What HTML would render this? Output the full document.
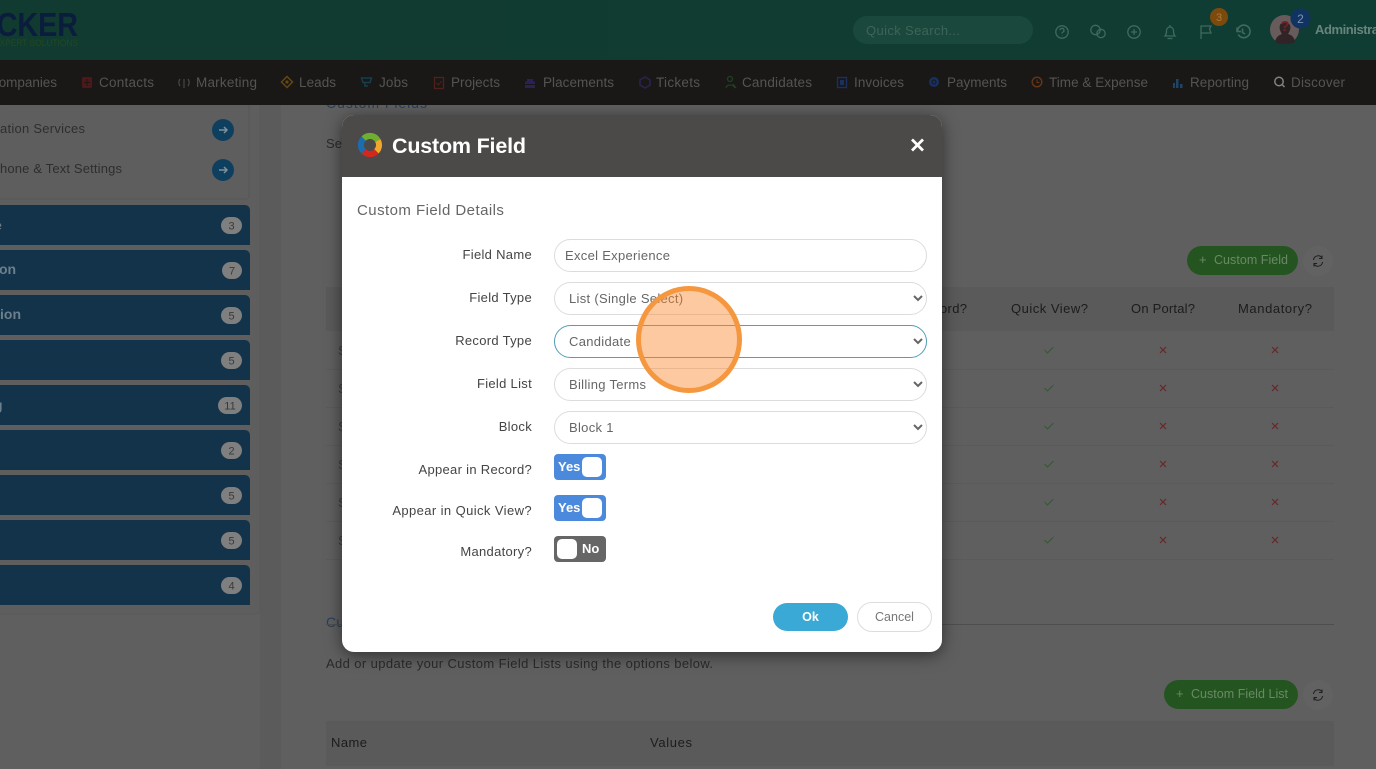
<!DOCTYPE html>
<html lang="en"><head><meta charset="utf-8"><title>Custom Field</title>
<style>
html,body{margin:0;padding:0;width:1376px;height:769px;overflow:hidden;background:#5f5f5f;font-family:"Liberation Sans",Arial,sans-serif}
svg text{font-family:"Liberation Sans",Arial,sans-serif}
#bg{position:absolute;left:0;top:0}
#modal{position:absolute;left:342px;top:115px;width:600px;height:537px;background:#fff;border-radius:12px;box-shadow:0 3px 16px rgba(0,0,0,.5);overflow:hidden}
#mh{height:62px;background:#4b4a48}
.c{position:absolute;left:212px;width:373px;height:33px;box-sizing:border-box;border:1px solid #dcdcdc;border-radius:17px;background:#fff;color:#666;font:13px "Liberation Sans",Arial,sans-serif;letter-spacing:.3px;padding:0 6px 0 10px;outline:0;margin:0}
input.c{padding-left:10px}
.l{position:absolute;right:410px;font-size:13px;letter-spacing:.3px;color:#444;white-space:nowrap;line-height:16px}
.t{position:absolute;left:212px;width:52px;height:26px;border-radius:4px;background:#4b89dc;color:#fff;font-size:13px;font-weight:bold}
.t i{position:absolute;top:3px;width:20px;height:20px;background:#fff;border-radius:5px}
.t span{position:absolute;top:5px;line-height:16px}
.off{background:#666}
.b{position:absolute;border-radius:16px;text-align:center;font-size:12.5px;box-sizing:border-box}
#dot{position:absolute;left:636px;top:286px;width:106px;height:107px;box-sizing:border-box;border:5px solid #f5973f;border-radius:50%;background:rgba(250,135,45,.45)}
</style></head><body>
<svg id="bg" width="1376" height="769" viewBox="0 0 1376 769" xmlns="http://www.w3.org/2000/svg">
<defs><linearGradient id="g" x1="0" x2="1" y1="0" y2="0"><stop offset="0" stop-color="#113a30"/><stop offset="1" stop-color="#103d33"/></linearGradient></defs>
<rect width="1376" height="769" fill="#5f5f5f"/>
<rect x="260" y="105" width="21" height="664" fill="#5b5b5b"/>
<rect x="0" y="105" width="260" height="509" rx="5" fill="#5e5e5e"/>
<path d="M0 199H246a3 3 0 0 0 3-3V105" fill="none" stroke="#575757"/>
<path d="M0 614H256a4 4 0 0 0 4-4V105" fill="none" stroke="#5a5a5a"/>

<text x="326" y="108" font-size="14" fill="#24405e" textLength="101">Custom Fields</text>

<!-- header -->
<rect width="1376" height="60" fill="url(#g)"/>
<text x="-24" y="36" font-size="33" font-weight="bold" fill="#0b1d3d" textLength="102" lengthAdjust="spacingAndGlyphs">ACKER</text>
<text x="-6" y="46" font-size="9.500" fill="#234a1c" textLength="84" lengthAdjust="spacingAndGlyphs">EXPERT SOLUTIONS</text>
<rect x="853" y="16" width="180" height="28" rx="14" fill="#1b483c"/>
<text x="866" y="35" font-size="13" fill="#3c6558" textLength="94">Quick Search...</text>
<g fill="none" stroke="#3f6a5d" stroke-width="1.300">
<circle cx="1062" cy="32" r="6.200"/><path d="M1060 30.300a2 2 0 1 1 2.900 1.800c-.7.4-.9.7-.9 1.400M1062 35.200v.4"/>
<circle cx="1095.500" cy="30" r="4.700"/><circle cx="1101" cy="33.500" r="4.200"/>
<circle cx="1134" cy="32" r="6.200"/><path d="M1134 29v6M1131 32h6"/>
<path d="M1165 36h10c-1.500-1.500-1.500-3-1.500-5.500a3.500 3.500 0 0 0-7 0c0 2.500 0 4-1.500 5.500zM1167.500 38.500h5M1170 25v2"/>
<path d="M1201 39V26h10l-1.500 3 1.500 4h-10"/>
<path d="M1237 27.500v4h4M1237.500 31a6.300 6.300 0 1 1 .8 3.500M1242.500 28.500v4l2.500 1.500" stroke-width="1.600"/>
</g>
<circle cx="1219" cy="17" r="9" fill="#7d4a0e"/><text x="1219" y="21" font-size="11" fill="#a87a3c" text-anchor="middle">3</text>
<circle cx="1284.500" cy="29.500" r="14.500" fill="#675b5c"/>
<path d="M1275 42c1-6 5-7 7-8-2-3-3-6-2-9 1-3 8-3 10 0 1 3 0 6-2 9 3 1 6 2 7 8-4 3-15 3-20 0z" fill="#302427"/>
<text x="1285" y="31" font-size="15" font-weight="bold" fill="#742024" text-anchor="middle">?</text>
<circle cx="1300.500" cy="18.500" r="10" fill="#103362"/><text x="1300.500" y="23" font-size="12" fill="#7c94b0" text-anchor="middle">2</text>
<text x="1315" y="34" font-size="13" font-weight="bold" fill="#68847b" textLength="64">Administra</text>

<!-- nav -->
<rect y="60" width="1376" height="45" fill="#1a1817"/>
<g font-size="13.500" fill="#545453">
<text x="-11" y="87" textLength="68">Companies</text>
<text x="99" y="87" textLength="55">Contacts</text>
<text x="196" y="87" textLength="61">Marketing</text>
<text x="299" y="87" textLength="37">Leads</text>
<text x="379" y="87" textLength="29">Jobs</text>
<text x="451" y="87" textLength="49">Projects</text>
<text x="543" y="87" textLength="71">Placements</text>
<text x="656" y="87" textLength="44">Tickets</text>
<text x="742" y="87" textLength="70">Candidates</text>
<text x="854" y="87" textLength="50">Invoices</text>
<text x="947" y="87" textLength="60">Payments</text>
<text x="1049" y="87" textLength="99">Time &amp; Expense</text>
<text x="1190" y="87" textLength="59">Reporting</text>
<text x="1291" y="87" textLength="54">Discover</text>
</g>
<rect x="82" y="77" width="10" height="11" rx="1.500" fill="#4e1818"/><path d="M84 82.500h6M87 79v7" stroke="#1a1817"/>
<g fill="none" stroke="#4c4c4a" stroke-width="1.100"><path d="M184 79v9M180 79c-1.500 2-1.500 5 0 7M188 79c1.500 2 1.500 5 0 7"/></g>
<g fill="none" stroke="#664810" stroke-width="1.400"><path d="M287 76.500l5.500 5.500-5.500 5.500-5.500-5.500z"/></g><circle cx="287" cy="82" r="1.600" fill="#664810"/>
<path d="M361.500 78h10l-1.500 4.500h-7zM365 83v3h3" fill="none" stroke="#153e4e" stroke-width="1.500"/>
<rect x="434.500" y="77.500" width="9" height="11" fill="none" stroke="#502118" stroke-width="1.300"/><path d="M436.500 83l2 2 3-4" fill="none" stroke="#502118"/>
<path d="M525 88v-6l2-1v-2h6v2l2 1v6z" fill="#2c2054"/><path d="M525 84.500h10" stroke="#1a1817"/>
<path d="M645 77l5 3v5l-5 3-5-3v-5z" fill="none" stroke="#2c224f" stroke-width="1.600"/>
<g fill="none" stroke="#1c421c" stroke-width="1.300"><circle cx="730" cy="79" r="2.500"/><path d="M726 88c1-4 7-4 9 0M733 84l3 4"/></g>
<rect x="837.500" y="77.500" width="9" height="10" fill="none" stroke="#1a305e" stroke-width="1.400"/><rect x="840" y="80" width="4" height="5" fill="#1a305e"/>
<circle cx="934" cy="82" r="5" fill="#183060"/><circle cx="934" cy="82" r="2" fill="none" stroke="#1a1817"/>
<circle cx="1037" cy="82" r="4.800" fill="none" stroke="#683514" stroke-width="1.400"/><path d="M1037 79.500V82.500h2.500" fill="none" stroke="#683514"/>
<path d="M1173 88v-5h2v5zM1176 88v-9h2.500v9zM1180 88v-4h2.500v4z" fill="#1c4568"/>
<circle cx="1279" cy="81.500" r="4.200" fill="none" stroke="#828282" stroke-width="1.500"/><path d="M1282 84.500l2.500 2.500" stroke="#828282" stroke-width="1.500"/>

<!-- sidebar -->
<g font-size="13" fill="#2e2e2e"><text x="0" y="133" textLength="85">ation Services</text><text x="0" y="173" textLength="122">hone &amp; Text Settings</text></g>
<g fill="#0f3f5e"><circle cx="223" cy="130" r="11"/><circle cx="223" cy="170" r="11"/></g>
<g fill="none" stroke="#7e909c" stroke-width="1.500"><path d="M219 130h7.500M224 127l3 3-3 3M219 170h7.500M224 167l3 3-3 3"/></g>
<g fill="#123349">
<path d="M0 205H245a5 5 0 0 1 5 5V245H0z"/>
<path d="M0 250H245a5 5 0 0 1 5 5V290H0z"/>
<path d="M0 295H245a5 5 0 0 1 5 5V335H0z"/>
<path d="M0 340H245a5 5 0 0 1 5 5V380H0z"/>
<path d="M0 385H245a5 5 0 0 1 5 5V425H0z"/>
<path d="M0 430H245a5 5 0 0 1 5 5V470H0z"/>
<path d="M0 475H245a5 5 0 0 1 5 5V515H0z"/>
<path d="M0 520H245a5 5 0 0 1 5 5V560H0z"/>
<path d="M0 565H245a5 5 0 0 1 5 5V605H0z"/>
</g>
<g font-size="14" font-weight="bold" fill="#6c7f8c"><text x="-6" y="230">e</text><text x="-1" y="274">on</text><text x="0" y="319">ion</text><text x="-6" y="410">g</text></g>
<g fill="#7f7f7f"><rect x="221" y="217" width="21" height="17" rx="8.500"/><rect x="222" y="262" width="20" height="17" rx="8.500"/><rect x="221" y="307" width="21" height="17" rx="8.500"/><rect x="221" y="352" width="21" height="17" rx="8.500"/><rect x="218" y="397" width="24" height="17" rx="8.500"/><rect x="221" y="442" width="21" height="17" rx="8.500"/><rect x="221" y="487" width="21" height="17" rx="8.500"/><rect x="221" y="532" width="21" height="17" rx="8.500"/><rect x="221" y="577" width="21" height="17" rx="8.500"/></g>
<g font-size="11" fill="#3a3a3a" text-anchor="middle"><text x="231.500" y="229.500">3</text><text x="232" y="274.500">7</text><text x="231.500" y="319.500">5</text><text x="231.500" y="364.500">5</text><text x="230" y="409.500">11</text><text x="231.500" y="454.500">2</text><text x="231.500" y="499.500">5</text><text x="231.500" y="544.500">5</text><text x="231.500" y="589.500">4</text></g>

<!-- main -->
<text x="326" y="148" font-size="13" fill="#2a2a2a" textLength="16">Se</text>
<rect x="1187" y="246" width="111" height="29" rx="14.500" fill="#245520"/>
<text x="1199" y="264" font-size="13" fill="#6a8866">+</text><text x="1214" y="264" font-size="12.500" fill="#6a8866" textLength="74">Custom Field</text>
<circle cx="1318" cy="261" r="15" fill="#626262"/>
<g fill="none" stroke="#1e1e1e" stroke-width="1"><path d="M1313.500 260a4.600 4.600 0 0 1 8.500-2M1322.500 262a4.600 4.600 0 0 1-8.500 2M1322 255.500v3h-3M1314 266.500v-3h3"/></g>
<rect x="326" y="287" width="1008" height="44" fill="#5a5a5a"/>
<g font-size="13" fill="#1c1c1c"><text x="940" y="313" textLength="27">ord?</text><text x="1011" y="313" textLength="77">Quick View?</text><text x="1131" y="313" textLength="64">On Portal?</text><text x="1238" y="313" textLength="74">Mandatory?</text></g>
<g stroke="#5a5a5a"><path d="M326 369.500H1334M326 407.500H1334M326 445.500H1334M326 483.500H1334M326 521.500H1334M326 559.500H1334"/></g>
<g font-size="13" fill="#3c3c3c"><text x="338" y="355">S</text><text x="338" y="393">S</text><text x="338" y="431">S</text><text x="338" y="469">S</text><text x="338" y="507">S</text><text x="338" y="545">S</text></g>
<g fill="none" stroke-width="1.100">
<path stroke="#345a32" d="M1044.500 350l3 3 6-6M1044.500 388l3 3 6-6M1044.500 426l3 3 6-6M1044.500 464l3 3 6-6M1044.500 502l3 3 6-6M1044.500 540l3 3 6-6"/>
<path stroke="#6a2626" stroke-width="1.200" d="M1160 347l6 6m0-6l-6 6M1272 347l6 6m0-6l-6 6M1160 385l6 6m0-6l-6 6M1272 385l6 6m0-6l-6 6M1160 423l6 6m0-6l-6 6M1272 423l6 6m0-6l-6 6M1160 461l6 6m0-6l-6 6M1272 461l6 6m0-6l-6 6M1160 499l6 6m0-6l-6 6M1272 499l6 6m0-6l-6 6M1160 537l6 6m0-6l-6 6M1272 537l6 6m0-6l-6 6"/>
</g>
<text x="326" y="627" font-size="14" fill="#24405e" textLength="18">Cu</text>
<path d="M326 624.500H1334" stroke="#4e4e4e"/>
<text x="326" y="668" font-size="13" fill="#2a2a2a" textLength="387">Add or update your Custom Field Lists using the options below.</text>
<rect x="1164" y="680" width="134" height="29" rx="14.500" fill="#245520"/>
<text x="1176" y="698" font-size="13" fill="#6a8866">+</text><text x="1191" y="698" font-size="12.500" fill="#6a8866" textLength="97">Custom Field List</text>
<circle cx="1318" cy="695" r="15" fill="#626262"/>
<g fill="none" stroke="#1e1e1e" stroke-width="1"><path d="M1313.500 694a4.600 4.600 0 0 1 8.500-2M1322.500 696a4.600 4.600 0 0 1-8.500 2M1322 689.500v3h-3M1314 700.500v-3h3"/></g>
<rect x="326" y="721" width="1008" height="45" fill="#5a5a5a"/>
<g font-size="13" fill="#1c1c1c"><text x="331" y="747" textLength="36">Name</text><text x="650" y="747" textLength="42">Values</text></g>
</svg>

<div id="modal">
<div id="mh">
<svg width="600" height="62" style="position:absolute;left:0;top:0">
<g fill="none" stroke-width="6">
<path d="M21.600 23.600A9 9 0 0 1 35.800 25.500" stroke="#6fae33"/>
<path d="M35.800 25.500A9 9 0 0 1 34.400 36.400" stroke="#f0a72c"/>
<path d="M34.400 36.400A9 9 0 0 1 21.600 36.400" stroke="#d4281f"/>
<path d="M21.600 36.400A9 9 0 0 1 21.600 23.600" stroke="#1c6cb0"/>
</g>
<text x="50" y="38" font-size="21.500" font-weight="bold" fill="#fff" textLength="134" style="font-family:'Liberation Sans',Arial,sans-serif">Custom Field</text>
<path d="M570 24.500l11 11m0-11l-11 11" stroke="#fff" stroke-width="2.800" fill="none"/>
</svg>
</div>
<div style="position:absolute;left:15px;top:87px;font-size:15px;letter-spacing:.45px;color:#666;line-height:18px;white-space:nowrap">Custom Field Details</div>

<div class="l" style="top:132px">Field Name</div>
<input class="c" style="top:124px" value="Excel Experience">
<div class="l" style="top:175px">Field Type</div>
<select class="c" style="top:167px"><option>List (Single Select)</option></select>
<div class="l" style="top:218px">Record Type</div>
<select class="c" style="top:210px;border-color:#4f9fb5"><option>Candidate</option></select>
<div class="l" style="top:261px">Field List</div>
<select class="c" style="top:253px"><option>Billing Terms</option></select>
<div class="l" style="top:304px">Block</div>
<select class="c" style="top:296px"><option>Block 1</option></select>

<div class="l" style="top:347px">Appear in Record?</div>
<div class="t" style="top:339px"><span style="left:4px">Yes</span><i style="left:28px"></i></div>
<div class="l" style="top:388px;letter-spacing:.4px">Appear in Quick View?</div>
<div class="t" style="top:380px"><span style="left:4px">Yes</span><i style="left:28px"></i></div>
<div class="l" style="top:429px">Mandatory?</div>
<div class="t off" style="top:421px"><i style="left:3px"></i><span style="left:28px">No</span></div>

<div class="b" style="left:431px;top:488px;width:75px;height:28px;line-height:28px;background:#3aa9d6;color:#fff;font-weight:bold">Ok</div>
<div class="b" style="left:515px;top:487px;width:75px;height:30px;line-height:28px;border:1px solid #ddd;color:#777;background:#fff">Cancel</div>
</div>
<div id="dot"></div>
</body></html>
